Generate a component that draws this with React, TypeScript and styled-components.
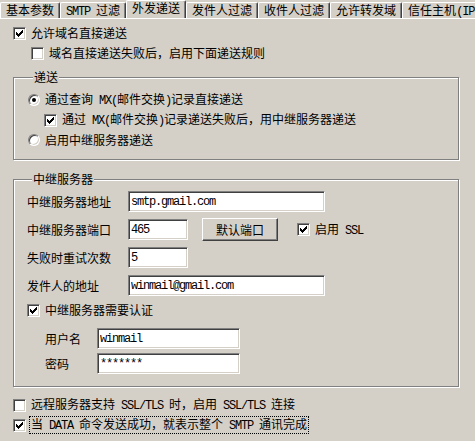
import styled, { createGlobalStyle } from 'styled-components';

const GlobalStyle = createGlobalStyle`
  html, body {
    margin: 0;
    padding: 0;
    background: #d4d0c8;
  }
  body {
    font-family: "Noto Sans CJK SC", "Noto Sans", sans-serif;
    font-size: 12px;
    color: #000;
  }
`;

const Window = styled.div`
  width: 475px;
  height: 441px;
  overflow: hidden;
  background: #d4d0c8;
`;

const TabStrip = styled.div`
  display: flex;
  align-items: flex-end;
  height: 18px;
  border-bottom: 1px solid #fff;
  white-space: nowrap;
  overflow: hidden;
`;

const Tab = styled.div<{ $active?: boolean }>`
  flex: none;
  box-sizing: border-box;
  height: ${(p) => (p.$active ? '19px' : '16px')};
  margin-bottom: ${(p) => (p.$active ? '-1px' : '0')};
  padding: 0 5px;
  border-top: 1px solid #fff;
  border-left: 1px solid #fff;
  border-right: 1px solid #404040;
  border-radius: 2px 2px 0 0;
  box-shadow: inset -1px 0 #808080;
  background: #d4d0c8;
  line-height: 13px;
  position: relative;
  z-index: ${(p) => (p.$active ? 1 : 0)};
`;

const Page = styled.div`
  padding-top: 4px;
`;

const Lat = styled.span`
  font-family: "Liberation Mono", "DejaVu Sans Mono", monospace;
  font-size: 12px;
  letter-spacing: -1.2px;
  white-space: pre;
`;

const Row = styled.div<{ $indent?: number; $top?: number }>`
  display: flex;
  align-items: center;
  gap: 5px;
  height: 20px;
  padding-left: ${(p) => p.$indent ?? 0}px;
  margin-top: ${(p) => p.$top ?? 0}px;
  white-space: nowrap;
`;

const Text = styled.span`
  line-height: 14px;
`;

const FocusText = styled.span`
  line-height: 14px;
  border: 1px dotted #000;
  padding: 0 1px;
  margin-left: -2px;
`;

const Box = styled.span`
  flex: none;
  box-sizing: border-box;
  width: 13px;
  height: 13px;
  background: #fff;
  border: 1px solid;
  border-color: #808080 #fff #fff #808080;
  box-shadow: inset 1px 1px #404040, inset -1px -1px #d4d0c8;
  display: flex;
  align-items: center;
  justify-content: center;
`;

const RadioBox = styled.span`
  flex: none;
  box-sizing: border-box;
  width: 12px;
  height: 12px;
  border-radius: 50%;
  background: #fff;
  border: 1px solid;
  border-color: #808080 #fff #fff #808080;
  box-shadow: inset 1px 1px #404040, inset -1px -1px #d4d0c8;
  display: flex;
  align-items: center;
  justify-content: center;
`;

const Dot = styled.span`
  width: 4px;
  height: 4px;
  border-radius: 50%;
  background: #000;
`;

const Group = styled.fieldset<{ $top: number; $pad: string }>`
  margin: ${(p) => p.$top}px 16px 0 13px;
  padding: ${(p) => p.$pad};
  border: 1px solid #808080;
  box-shadow: inset 1px 1px #fff, 1px 1px #fff;
  min-width: 0;
`;

const Legend = styled.legend`
  margin-left: 5px;
  padding: 0 1px;
  line-height: 14px;
  background: #d4d0c8;
`;

const FieldRow = styled.div<{ $top?: number; $label?: number }>`
  display: flex;
  align-items: center;
  height: 23px;
  margin-top: ${(p) => p.$top ?? 0}px;
  padding-left: ${(p) => (p.$label ? 18 : 0)}px;
  white-space: nowrap;
`;

const Label = styled.span<{ $w: number }>`
  flex: none;
  width: ${(p) => p.$w}px;
  line-height: 14px;
`;

const Input = styled.input<{ $w: number }>`
  flex: none;
  box-sizing: border-box;
  width: ${(p) => p.$w}px;
  height: 21px;
  padding: 0 2px;
  margin: 0;
  background: #fff;
  border: 1px solid;
  border-color: #808080 #fff #fff #808080;
  box-shadow: inset 1px 1px #404040, inset -1px -1px #d4d0c8;
  font-family: "Liberation Mono", "DejaVu Sans Mono", monospace;
  font-size: 12px;
  letter-spacing: -1.2px;
  color: #000;
  outline: none;
`;

const Button = styled.button`
  flex: none;
  box-sizing: border-box;
  width: 76px;
  height: 23px;
  margin: 0 0 0 14px;
  padding: 0;
  background: #d4d0c8;
  border: 1px solid;
  border-color: #fff #404040 #404040 #fff;
  box-shadow: inset -1px -1px #808080;
  font-family: inherit;
  font-size: 12px;
  line-height: 14px;
  color: #000;
`;

const Inline = styled.span`
  display: flex;
  align-items: center;
  gap: 5px;
  margin-left: 19px;
`;

function Check({ on }: { on?: boolean }) {
  return (
    <Box>
      {on && (
        <svg width="7" height="7" viewBox="0 0 7 7" shapeRendering="crispEdges">
          {[2, 3, 4, 3, 2, 1, 0].map((y, x) => (
            <rect key={x} x={x} y={y} width="1" height="3" fill="#000" />
          ))}
        </svg>
      )}
    </Box>
  );
}

function Radio({ on }: { on?: boolean }) {
  return <RadioBox>{on && <Dot />}</RadioBox>;
}

export default function App() {
  return (
    <Window>
      <GlobalStyle />
      <TabStrip>
        <Tab>基本参数</Tab>
        <Tab>
          <Lat>SMTP </Lat>过滤
        </Tab>
        <Tab $active>外发递送</Tab>
        <Tab>发件人过滤</Tab>
        <Tab>收件人过滤</Tab>
        <Tab>允许转发域</Tab>
        <Tab>
          信任主机<Lat>(IP</Lat>
        </Tab>
      </TabStrip>

      <Page>
        <Row $indent={13}>
          <Check on />
          <Text>允许域名直接递送</Text>
        </Row>
        <Row $indent={31}>
          <Check />
          <Text>域名直接递送失败后，启用下面递送规则</Text>
        </Row>

        <Group $top={7} $pad="6px 0 9px 14px">
          <Legend>递送</Legend>
          <Row>
            <Radio on />
            <Text>
              通过查询<Lat> MX(</Lat>邮件交换<Lat>)</Lat>记录直接递送
            </Text>
          </Row>
          <Row $indent={16}>
            <Check on />
            <Text>
              通过<Lat> MX(</Lat>邮件交换<Lat>)</Lat>记录递送失败后，用中继服务器递送
            </Text>
          </Row>
          <Row>
            <Radio />
            <Text>启用中继服务器递送</Text>
          </Row>
        </Group>

        <Group $top={12} $pad="4px 0 11px 13px">
          <Legend>中继服务器</Legend>
          <FieldRow>
            <Label $w={101}>中继服务器地址</Label>
            <Input $w={197} readOnly defaultValue="smtp.gmail.com" />
          </FieldRow>
          <FieldRow $top={5}>
            <Label $w={101}>中继服务器端口</Label>
            <Input $w={60} readOnly defaultValue="465" />
            <Button>默认端口</Button>
            <Inline>
              <Check on />
              <Text>
                启用<Lat> SSL</Lat>
              </Text>
            </Inline>
          </FieldRow>
          <FieldRow $top={5}>
            <Label $w={101}>失败时重试次数</Label>
            <Input $w={60} readOnly defaultValue="5" />
          </FieldRow>
          <FieldRow $top={5}>
            <Label $w={101}>发件人的地址</Label>
            <Input $w={197} readOnly defaultValue="winmail@gmail.com" />
          </FieldRow>
          <Row $top={3}>
            <Check on />
            <Text>中继服务器需要认证</Text>
          </Row>
          <FieldRow $top={7} $label={1}>
            <Label $w={52}>用户名</Label>
            <Input $w={143} readOnly defaultValue="winmail" />
          </FieldRow>
          <FieldRow $top={2} $label={1}>
            <Label $w={52}>密码</Label>
            <Input $w={143} readOnly defaultValue="*******" />
          </FieldRow>
        </Group>

        <Row $indent={13} $top={8}>
          <Check />
          <Text>
            远程服务器支持<Lat> SSL/TLS </Lat>时，启用<Lat> SSL/TLS </Lat>连接
          </Text>
        </Row>
        <Row $indent={13}>
          <Check on />
          <FocusText>
            当<Lat> DATA </Lat>命令发送成功，就表示整个<Lat> SMTP </Lat>通讯完成
          </FocusText>
        </Row>
      </Page>
    </Window>
  );
}
